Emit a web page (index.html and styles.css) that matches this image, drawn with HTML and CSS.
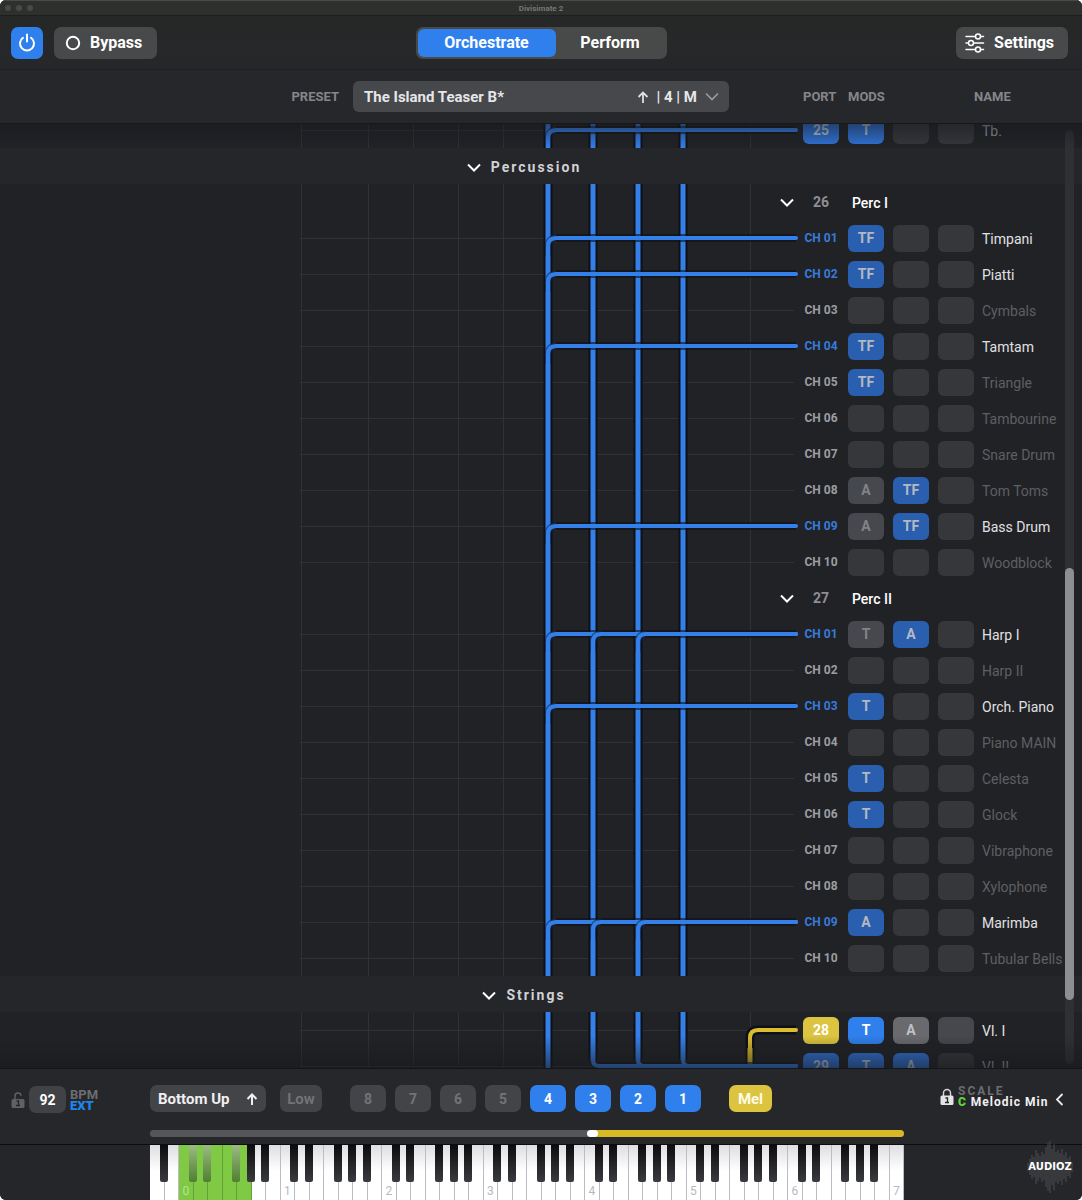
FILE: index.html
```html
<!DOCTYPE html>
<html lang="en">
<head>
<meta charset="utf-8">
<title>Divisimate 2</title>
<link rel="stylesheet" href="styles.css">
</head>
<body>
<div class="window">
  <header class="titlebar">
    <span class="lights"><i></i><i></i><i></i></span>
    <span class="title">Divisimate 2</span>
    <span></span>
  </header>

  <div class="toolbar">
    <div class="toolbar-left">
      <button class="power" aria-label="Power">
        <svg width="20" height="20" viewBox="0 0 20 20" fill="none" stroke="#fff" stroke-width="2" stroke-linecap="round"><path d="M6 4.7a7 7 0 1 0 8 0M10 1.500v7"/></svg>
      </button>
      <button class="tool bypass">
        <svg width="16" height="16" viewBox="0 0 16 16" fill="none" stroke="#fff" stroke-width="2"><circle cx="8" cy="8" r="6.2"/></svg>
        Bypass
      </button>
    </div>
    <div class="tabs">
      <button class="tab active">Orchestrate</button>
      <button class="tab">Perform</button>
    </div>
    <div class="toolbar-right">
      <button class="tool settings">
        <svg width="20" height="20" viewBox="0 0 20 20" fill="none" stroke="#fff" stroke-width="1.5" stroke-linecap="round"><path d="M1 3.5h9M16 3.5h2.5M1 10h1.500M9 10h9.500M1 16.500h9M16 16.500h2.500"/><circle cx="13" cy="3.500" r="2.500"/><circle cx="6" cy="10" r="2.500"/><circle cx="13" cy="16.500" r="2.500"/></svg>
        Settings
      </button>
    </div>
  </div>

  <div class="presetbar">
    <label class="caption preset-label" for="preset">PRESET</label>
    <div class="preset">
      <select id="preset" class="preset-select"><option>The Island Teaser B*</option></select>
      <span class="preset-info">
        <svg width="12" height="14" viewBox="0 0 12 14" fill="none" stroke="#dedee0" stroke-width="1.8"><path d="M6 13V2.500M1.500 7L6 2.500L10.500 7"/></svg>
        <span>| 4 | M</span>
        <svg width="14" height="9" viewBox="0 0 14 9" fill="none" stroke="#9c9ca0" stroke-width="1.6"><path d="M1 1.500L7 7.500L13 1.500"/></svg>
      </span>
    </div>
    <div class="columns">
      <span class="caption col-port">PORT</span>
      <span class="caption col-mods">MODS</span>
      <span class="caption col-name">NAME</span>
    </div>
  </div>

  <main class="viewport">
    <div class="list" id="list"></div>
    <div class="scrollbar"><div class="thumb"></div></div>
    <div class="fade"></div>
  </main>

  <footer class="footer">
    <div class="tempo">
      <svg class="lock" width="14" height="18" viewBox="0 0 14 18"><path d="M4 8V5.200a3 3 0 0 1 6-.4" fill="none" stroke="#606165" stroke-width="1.400"/><rect x="0.500" y="8" width="13" height="9" rx="1.500" fill="#606165"/><path d="M5.500 10h2v4M5 14.500h4" fill="none" stroke="#25262a" stroke-width="1.300"/></svg>
      <input class="bpm" id="bpm" value="92">
      <label class="bpm-label" for="bpm">BPM<b>EXT</b></label>
    </div>
    <div class="voices">
      <button class="voice order">Bottom Up
        <svg width="12" height="14" viewBox="0 0 12 14" fill="none" stroke="#f0f0f2" stroke-width="2"><path d="M6 13V2.500M1.500 7L6 2.500L10.500 7"/></svg>
      </button>
      <button class="voice low">Low</button>
      <div class="channels">
        <button class="voice">8</button>
        <button class="voice">7</button>
        <button class="voice">6</button>
        <button class="voice">5</button>
        <button class="voice on">4</button>
        <button class="voice on">3</button>
        <button class="voice on">2</button>
        <button class="voice on">1</button>
      </div>
      <button class="voice mel">Mel</button>
    </div>
    <div class="scale">
      <svg class="lock" width="14" height="18" viewBox="0 0 14 18"><path d="M3.500 8V5a3.500 3.500 0 0 1 7 0v3" fill="none" stroke="#d8d8da" stroke-width="1.400"/><rect x="0.500" y="7.500" width="13" height="9.500" rx="1.500" fill="#e4e4e6"/><path d="M5.500 10h2v4M5 14.500h4" fill="none" stroke="#25262a" stroke-width="1.300"/></svg>
      <div class="scale-text">
        <span class="scale-caption">SCALE</span>
        <span class="scale-value"><b>C</b> Melodic Min</span>
      </div>
      <button class="back" aria-label="Open scale panel"><svg width="9" height="13" viewBox="0 0 9 13" fill="none" stroke="#e8e8ea" stroke-width="1.800"><path d="M7.500 1L2 6.500L7.500 12"/></svg></button>
    </div>
    <input class="split" type="range" min="0" max="1000" value="588" aria-label="Melody split point">
  </footer>

  <div class="keybed">
    <div class="keyboard" id="keyboard"></div>
    <div class="brand">
      <svg class="brand-bars" id="bars" width="46" height="52" viewBox="0 0 46 52"></svg>
      <span class="brand-name">AUDIOZ</span>
    </div>
  </div>
</div>
<script src="app.js"></script>
</body>
</html>
```
FILE: styles.css
```css
* { box-sizing: border-box; }
html { background: #fff; }
body {
  margin: 0;
  font-family: Roboto, "Liberation Sans", sans-serif;
  color: #fff;
}
button, select, input { font: inherit; color: inherit; border: 0; margin: 0; padding: 0; }
svg { display: block; flex: none; }

.window {
  display: flex;
  flex-direction: column;
  height: 100vh;
  border-radius: 6px;
  overflow: hidden;
  background: #25262a;
}

.titlebar {
  display: grid;
  grid-template-columns: 1fr auto 1fr;
  align-items: center;
  height: 16px;
  flex: none;
  padding: 0 5px;
  background: #2e302d;
  border-top: 1px solid #494b49;
  border-bottom: 1px solid #1d1e1e;
}
.lights { display: flex; gap: 5px; }
.lights i { width: 6px; height: 6px; border-radius: 50%; background: #484a48; }
.title { font-size: 8px; font-weight: 700; color: #757774; }

.toolbar {
  display: grid;
  grid-template-columns: 1fr auto 1fr;
  align-items: center;
  height: 54px;
  flex: none;
  padding: 0 11px;
  background: linear-gradient(#262827, #26272a);
  border-bottom: 1px solid #1e1f22;
}
.toolbar-left { display: flex; gap: 11px; }
.toolbar-right { display: flex; justify-content: flex-end; padding-right: 3px; }
.power {
  display: grid;
  place-items: center;
  width: 32px;
  height: 32px;
  border-radius: 7px;
  background: #2f80ed;
}
.tool {
  display: flex;
  align-items: center;
  height: 32px;
  border-radius: 7px;
  background: #48494a;
  font-size: 16px;
  font-weight: 700;
}
.bypass { gap: 9px; padding: 0 15px 0 11px; }
.settings { gap: 9px; padding: 0 14px 0 9px; }
.tabs {
  display: flex;
  width: 251px;
  height: 32px;
  padding: 2px;
  border-radius: 7px;
  background: #484a4a;
}
.tab {
  flex: 1;
  border-radius: 6px;
  background: none;
  font-size: 16px;
  font-weight: 700;
}
.tab.active { flex: none; width: 138px; padding: 0; background: #2f80ed; }

.presetbar {
  display: grid;
  grid-template-columns: 1fr 376px 1fr;
  align-items: center;
  height: 54px;
  flex: none;
  background: #26272b;
  border-bottom: 1px solid #17181b;
}
.caption { font-size: 13px; font-weight: 700; color: #85868a; }
.preset-label { justify-self: end; margin-right: 14px; }
.preset { position: relative; }
.preset-select {
  appearance: none;
  display: block;
  width: 100%;
  height: 31px;
  padding-left: 11px;
  border-radius: 6px;
  background: #47484c;
  font-size: 15px;
  font-weight: 700;
  color: #e6e6e8;
}
.preset-info {
  position: absolute;
  top: 0;
  right: 10px;
  bottom: 0;
  display: flex;
  align-items: center;
  gap: 8px;
  font-size: 15px;
  font-weight: 700;
  color: #e6e6e8;
  pointer-events: none;
}
.columns { display: flex; justify-content: flex-end; }
.col-port { width: 45px; }
.col-mods { width: 126px; }
.col-name { width: 108px; }

.viewport {
  position: relative;
  display: flex;
  flex: 1;
  min-height: 0;
  overflow: hidden;
  background: #212226;
}
.list { flex: 1; min-width: 0; margin-top: -12px; }
.scrollbar {
  display: grid;
  grid-template-rows: 438fr 433fr 64fr;
  width: 9px;
  margin: 6px 8px 4px 0;
  border-radius: 5px;
  background: #2f3034;
}
.thumb { grid-row: 2; border-radius: 5px; background: #8e8e92; }
.fade {
  position: absolute;
  inset: 0;
  pointer-events: none;
  background:
    linear-gradient(rgba(24, 25, 30, .55), rgba(24, 25, 30, 0)) top / 100% 24px no-repeat,
    linear-gradient(rgba(24, 25, 29, 0), rgba(24, 25, 29, .6)) bottom / 100% 32px no-repeat;
}

.section {
  display: flex;
  align-items: center;
  justify-content: center;
  gap: 10px;
  width: calc(100% + 17px);
  height: 36px;
  padding: 2px 34px 0 0;
  background: #25262a;
  font-size: 14px;
  font-weight: 700;
  letter-spacing: 2px;
  color: #d2d2d5;
}

.row { display: flex; justify-content: flex-end; align-items: center; height: 36px; }
.wires { width: 498px; height: 36px; margin-right: 5px; }
.ports { display: flex; align-items: center; gap: 9px; }
.cell { width: 36px; height: 27px; border-radius: 6px; font-size: 14px; font-weight: 700; text-align: center; }
.channel { width: 36px; font-size: 12px; font-weight: 700; text-align: center; white-space: nowrap; color: #9c9da1; }
.channel.live { color: #377bdc; }
.port { background: #2f80ed; }
.port.yellow { background: #dcc440; }
.mod { background: #36373b; color: #96979b; }
.mod.idle { background: #47484d; color: #828388; }
.mod.set { background: #2a5faf; color: #b4b8c2; }
.bright .mod { background: #47484d; }
.bright .mod.idle { background: #69696e; color: #c0c0c4; }
.bright .mod.set { background: #2f80ed; color: #fff; }
.mid .port, .mid .mod.set { background: #2f74d8; color: #bcc8da; }
.name { width: 83px; margin-left: 8px; padding-top: 2px; font-size: 14px; white-space: nowrap; color: #5e5f63; }
.name.lit { color: #e0e0e2; }
.name.half { color: #9c9da1; }
.number { width: 36px; font-size: 14px; font-weight: 700; text-align: center; color: #8e8f93; }
.group { width: 217px; padding: 2px 0 0 4px; font-size: 14px; font-weight: 500; }
.fold { display: grid; place-items: center; width: 20px; height: 20px; margin-right: 6px; background: none; }
.group-row .wires { margin-right: -21px; }

.grid-line { stroke: #303135; stroke-width: 1; }
.casing { fill: none; stroke: #0e1016; stroke-width: 9; }
.casing.soft { stroke-width: 8; opacity: .6; }
.wire { fill: none; stroke: #347fe8; stroke-width: 4; stroke-linecap: round; }
.wire.trunk { stroke-width: 5; stroke-linecap: butt; }
.wire.melody { stroke: #dcbd2c; }
.trim { fill: none; stroke: #12305f; stroke-width: 6; opacity: .7; }

.footer {
  display: grid;
  grid-template-columns: 150px 1fr 178px;
  grid-template-rows: 61px 14px;
  flex: none;
  background: #26272a;
  border-top: 1px solid #141518;
  border-bottom: 1px solid #0c0c0e;
}
.tempo { display: flex; align-items: center; padding-left: 11px; }
.bpm {
  width: 37px;
  height: 27px;
  margin: 0 4px;
  border-radius: 7px;
  background: #414246;
  font-size: 14px;
  font-weight: 700;
  text-align: center;
}
.bpm-label { display: grid; font-size: 13px; font-weight: 700; line-height: 11px; color: #6c6d71; }
.bpm-label b { color: #1b86ea; }
.voices { display: flex; align-items: center; padding-bottom: 2px; }
.voice {
  width: 36px;
  height: 27px;
  border-radius: 7px;
  background: #434448;
  font-size: 14px;
  font-weight: 700;
  color: #727377;
}
.channels { display: flex; gap: 9px; margin: 0 28px; }
.voice.on { background: #2f80ed; color: #fff; }
.voice.order {
  display: flex;
  align-items: center;
  justify-content: space-between;
  width: 116px;
  margin-right: 14px;
  padding: 0 8px;
  font-size: 15px;
  color: #f0f0f2;
}
.voice.low { width: 42px; font-size: 15px; }
.voice.mel { width: 43px; background: #dcc440; font-size: 15px; color: #fffbe8; }
.scale { display: flex; align-items: center; padding: 0 0 5px 36px; }
.scale .lock { margin-right: 4px; }
.scale-text { display: grid; font-size: 12px; font-weight: 700; line-height: 11px; white-space: nowrap; }
.scale-caption { letter-spacing: 2px; color: #6c6d71; }
.scale-value { letter-spacing: 1px; color: #f0f0f2; }
.scale-value b { color: #5fd53a; }
.back { margin: 5px 0 0 7px; background: none; }
.split {
  grid-column: 2;
  appearance: none;
  width: 100%;
  height: 7px;
  border-radius: 4px;
  background: linear-gradient(90deg, #55565a 59%, #d8b825 59%);
}
.split::-webkit-slider-thumb { appearance: none; width: 11px; height: 7px; border-radius: 4px; background: #fff; }

.keybed {
  display: grid;
  grid-template-columns: 150px 1fr 178px;
  height: 55px;
  flex: none;
  background: #25262a;
}
.keyboard { grid-column: 2; display: flex; overflow: hidden; }
.key {
  position: relative;
  flex: 1;
  display: flex;
  align-items: flex-end;
  justify-content: center;
  padding-bottom: 3px;
  background: linear-gradient(#dedee2, #fff 26px);
  border-right: 1px solid #bcbcc2;
  font-size: 12px;
  line-height: 12px;
  color: #b8b8bd;
}
.key.held { background: #80c944; border-color: #62a038; color: #b4e492; }
.key.sharp::after {
  content: "";
  position: absolute;
  z-index: 1;
  top: 0;
  right: -4px;
  width: 8px;
  height: 37px;
  border-radius: 0 0 2px 2px;
  background: linear-gradient(#0c0c0e, #3a3b3e);
}
.key.sharp-held::after { background: linear-gradient(#9cba84, #4f7f30); }
.brand { display: grid; place-items: center; justify-self: end; width: 46px; margin-right: 9px; margin-top: -12px; }
.brand > * { grid-area: 1 / 1; }
.brand-bars { stroke: #4c4d51; }
.brand-name { font-family: "DejaVu Sans", sans-serif; font-size: 10px; font-weight: 700; line-height: 12px; color: #fff; }
```
FILE: app.js
```
const GRID = [1, 68, 113, 158, 203, 248, 293, 338, 383, 450];
const TRUNKS = [248, 293, 338, 383];

const TRACKS = [
  { port: 25, wires: [248], mods: ["T*", "", ""], name: "Tb.", look: "mid", tone: "half" },
  { section: "Percussion" },
  { group: "Perc I", number: 26 },
  { ch: "01", wires: [248], mods: ["TF*", "", ""], name: "Timpani", tone: "lit" },
  { ch: "02", wires: [248], mods: ["TF*", "", ""], name: "Piatti", tone: "lit" },
  { ch: "03", mods: ["", "", ""], name: "Cymbals" },
  { ch: "04", wires: [248], mods: ["TF*", "", ""], name: "Tamtam", tone: "lit" },
  { ch: "05", mods: ["TF*", "", ""], name: "Triangle" },
  { ch: "06", mods: ["", "", ""], name: "Tambourine" },
  { ch: "07", mods: ["", "", ""], name: "Snare Drum" },
  { ch: "08", mods: ["A", "TF*", ""], name: "Tom Toms" },
  { ch: "09", wires: [248], mods: ["A", "TF*", ""], name: "Bass Drum", tone: "lit" },
  { ch: "10", mods: ["", "", ""], name: "Woodblock" },
  { group: "Perc II", number: 27 },
  { ch: "01", wires: [248, 293, 338], mods: ["T", "A*", ""], name: "Harp I", tone: "lit" },
  { ch: "02", mods: ["", "", ""], name: "Harp II" },
  { ch: "03", wires: [248], mods: ["T*", "", ""], name: "Orch. Piano", tone: "lit" },
  { ch: "04", mods: ["", "", ""], name: "Piano MAIN" },
  { ch: "05", mods: ["T*", "", ""], name: "Celesta" },
  { ch: "06", mods: ["T*", "", ""], name: "Glock" },
  { ch: "07", mods: ["", "", ""], name: "Vibraphone" },
  { ch: "08", mods: ["", "", ""], name: "Xylophone" },
  { ch: "09", wires: [248, 293, 338], mods: ["A*", "", ""], name: "Marimba", tone: "lit" },
  { ch: "10", mods: ["", "", ""], name: "Tubular Bells" },
  { section: "Strings" },
  { port: 28, color: "yellow", melody: "start", mods: ["T*", "A", ""], name: "Vl. I", look: "bright", tone: "lit" },
  { port: 29, ends: [293, 338, 383], melody: "through", mods: ["T*", "A*", ""], name: "Vl. II", look: "mid", tone: "half" }
];

const chevron = '<svg width="14" height="9" viewBox="0 0 14 9" fill="none" stroke="#fff" stroke-width="2"><path d="M1 1.500L7 7.500L13 1.500"/></svg>';

function stroke(d, kind) {
  return `<path class="casing" d="${d}"/><path class="wire ${kind || ""}" d="${d}"/>`;
}

function wires(track) {
  const ends = track.ends || [];
  let out = GRID.map(x => `<path class="grid-line" d="M${x}.5 0V36"/>`).join("");
  if (!track.group) out += '<path class="grid-line" d="M0 18.500H494"/>';
  TRUNKS.filter(x => !ends.includes(x)).forEach(x => { out += stroke(`M${x} 0V36`, "trunk"); });

  if (track.wires) {
    // Each branch leaves its trunk upwards and bends right into the port.
    out += `<path class="casing soft" d="M${track.wires[0] + 8} 18H496"/>`;
    track.wires.forEach(x => {
      const d = `M${x} 36V26Q${x} 18 ${x + 8} 18`;
      out += `<path class="trim" d="${d}"/><path class="wire" d="${d}H496"/>`;
    });
  }
  if (track.melody === "start") out += stroke("M450 40V26Q450 18 458 18H496", "melody");
  if (track.melody === "through") out += stroke("M450 0V36", "melody trunk");
  if (ends.length) {
    out += `<path class="casing soft" d="M${ends[0]} 18H496"/>`;
    ends.forEach(x => {
      out += stroke(`M${x} 0V12`, "trunk");
      out += `<path class="wire" d="M${x} 9V12Q${x} 18 ${x + 6} 18H496"/>`;
    });
  }
  return `<svg class="wires" viewBox="0 0 498 36">${out}</svg>`;
}

function mod(value, index) {
  const set = value.endsWith("*");
  const kind = set ? "set" : value ? "idle" : "";
  return `<button class="cell mod ${kind}" aria-label="Mod slot ${index + 1}">${value.replace("*", "")}</button>`;
}

function row(track) {
  if (track.section) return `<button class="section">${chevron}<span>${track.section}</span></button>`;
  if (track.group) {
    return `<div class="row group-row">${wires(track)}<button class="fold" aria-label="Fold ${track.group}">${chevron}</button>
      <div class="ports"><span class="number">${track.number}</span><span class="group">${track.group}</span></div></div>`;
  }
  const port = track.ch
    ? `<span class="channel ${track.wires ? "live" : ""}">CH ${track.ch}</span>`
    : `<button class="cell port ${track.color || ""}">${track.port}</button>`;
  return `<div class="row ${track.look || ""}">${wires(track)}
    <div class="ports">${port}${track.mods.map(mod).join("")}</div>
    <span class="name ${track.tone || ""}">${track.name}</span></div>`;
}

document.getElementById("list").innerHTML = TRACKS.map(row).join("");

// 52 white keys, starting on A; C keys carry the octave number.
const SHARPS = "ACDFG";
let octave = 0;
let keys = "";
for (let i = 0; i < 52; i++) {
  const note = "ABCDEFG"[i % 7];
  const held = i >= 2 && i <= 6;
  const cls = ["key"];
  if (held) cls.push("held");
  if (SHARPS.includes(note) && i < 51) cls.push("sharp");
  if (held && i < 6) cls.push("sharp-held");
  keys += `<span class="${cls.join(" ")}">${note === "C" ? octave++ : ""}</span>`;
}
document.getElementById("keyboard").innerHTML = keys;

const heights = [8, 16, 24, 20, 34, 28, 22, 30, 26, 40, 48, 52, 36, 46, 30, 34, 28, 36, 24, 30, 18, 22, 10];
document.getElementById("bars").innerHTML = heights
  .map((h, i) => `<path d="M${i * 2 + 1} ${26 - h / 2}v${h}"/>`).join("");
```
